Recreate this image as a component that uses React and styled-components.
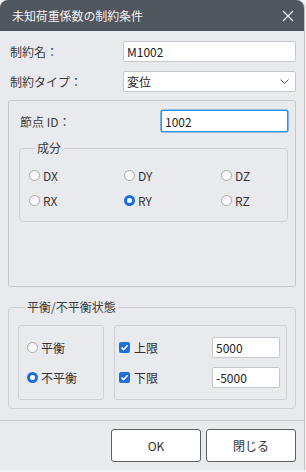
import React from "react";
import styled, { createGlobalStyle, css } from "styled-components";

const GlobalStyle = createGlobalStyle`
  html, body {
    margin: 0;
    padding: 0;
    background: #f3f3f4;
  }
  body {
    font-family: "Noto Sans CJK JP", "Noto Sans", sans-serif;
    font-size: 12px;
    color: #333;
  }
`;

const Dialog = styled.div`
  width: 304px;
  height: 470px;
  background: #e9eaee;
  border-radius: 8px 8px 0 0;
  box-shadow: 1px 0 0 #c3c5c9, 0 1px 1px rgba(0, 0, 0, 0.55);
  display: flex;
  flex-direction: column;
  overflow: hidden;
`;

const TitleBar = styled.div`
  height: 31px;
  flex: none;
  background: #50565d;
  display: flex;
  align-items: center;
  justify-content: space-between;
  padding: 0 10px 0 12px;
`;

const Title = styled.span`
  color: #f2f3f4;
  font-size: 12px;
  letter-spacing: -0.1px;
`;

const CloseButton = styled.div`
  width: 12px;
  height: 12px;
  display: flex;
  align-items: center;
  justify-content: center;
`;

const Body = styled.div`
  flex: 1;
  padding: 10px 8px 0;
  display: flex;
  flex-direction: column;
`;

const FormRow = styled.div`
  display: grid;
  grid-template-columns: 115px 173px;
  align-items: center;
  height: 21px;
  margin-bottom: ${(p) => p.$gap || 0}px;
`;

const Label = styled.span`
  padding-left: ${(p) => (p.$indent === undefined ? 2 : p.$indent)}px;
  color: #3a3a3a;
  white-space: nowrap;
`;

const fieldBox = css`
  box-sizing: border-box;
  background: #fff;
  border: 1px solid #c5c7cb;
  border-radius: 2px;
  display: flex;
  align-items: center;
  padding: 0 3px;
  font-size: 12px;
  color: #222;
`;

const TextField = styled.div`
  ${fieldBox};
  height: ${(p) => p.$h || 21}px;
  width: ${(p) => (p.$w ? `${p.$w}px` : "auto")};
  ${(p) =>
    p.$focused &&
    css`
      border-color: #3593e6;
      box-shadow: 0 0 0 0.6px #3593e6;
    `}
`;

const SelectField = styled.div`
  ${fieldBox};
  height: 21px;
  justify-content: space-between;
  padding-right: 6px;
`;

const Panel = styled.div`
  box-sizing: border-box;
  height: 187px;
  margin-top: 8px;
  border: 1px solid #c6c8cc;
  border-radius: 3px;
  padding: 9px 7px 0 10px;
`;

const NodeRow = styled.div`
  display: flex;
  align-items: center;
  justify-content: space-between;
  height: 22px;
  padding-left: 1px;
`;

const Group = styled.fieldset`
  margin: ${(p) => p.$mt || 0}px 0 0;
  padding: ${(p) => p.$pad};
  border: 1px solid #cfd1d5;
  border-radius: 4px;
  min-width: 0;
`;

const Legend = styled.legend`
  margin-left: ${(p) => p.$ml}px;
  padding: 0 2px;
  height: 16px;
  line-height: 16px;
  color: #3a3a3a;
`;

const RadioGrid = styled.div`
  display: grid;
  grid-template-columns: 95px 97px 1fr;
  row-gap: 5px;
`;

const Choice = styled.label`
  display: flex;
  align-items: center;
  gap: ${(p) => p.$gap || 3}px;
  height: 20px;
  color: #333;
`;

const RadioDot = styled.span`
  box-sizing: border-box;
  width: 11px;
  height: 11px;
  border-radius: 50%;
  flex: none;
  ${(p) =>
    p.$checked
      ? css`
          border: 3.5px solid #1b6fdc;
          background: #fff;
        `
      : css`
          border: 1px solid #a9abaf;
          background: linear-gradient(#f4f4f4, #ffffff);
        `}
`;

const CheckBox = styled.span`
  width: 11px;
  height: 11px;
  border-radius: 2px;
  background: #1f6fd8;
  flex: none;
  display: flex;
  align-items: center;
  justify-content: center;
`;

const StateRow = styled.div`
  display: flex;
  gap: 10px;
`;

const InnerBox = styled.div`
  box-sizing: border-box;
  height: 75px;
  border: 1px solid #cfd1d5;
  border-radius: 3px;
  display: flex;
  flex-direction: column;
  justify-content: center;
  gap: ${(p) => p.$gap}px;
  padding: ${(p) => p.$pad};
  width: ${(p) => (p.$w ? `${p.$w}px` : "auto")};
  flex: ${(p) => (p.$w ? "none" : 1)};
`;

const LimitRow = styled.div`
  display: flex;
  align-items: center;
  justify-content: space-between;
  height: 21px;
`;

const Footer = styled.div`
  margin-top: 10px;
  border-top: 1px solid #c6c8cc;
  padding: 8px 8px 8px 0;
  display: flex;
  justify-content: flex-end;
  gap: 5px;
`;

const Button = styled.button`
  width: 90px;
  height: 33px;
  background: #fff;
  border: 1px solid #5b5e63;
  border-radius: 3px;
  font-family: inherit;
  font-size: 12px;
  color: #333;
  padding: 0;
`;

const CloseIcon = () => (
  <svg width="12" height="12" viewBox="0 0 12 12">
    <path d="M1 1 L11 11 M11 1 L1 11" stroke="#f2f3f4" strokeWidth="1.2" />
  </svg>
);

const Chevron = () => (
  <svg width="9" height="5" viewBox="0 0 9 5">
    <polyline points="0.5,0.5 4.5,4.5 8.5,0.5" fill="none" stroke="#555" strokeWidth="1" />
  </svg>
);

const CheckMark = () => (
  <svg width="9" height="9" viewBox="0 0 9 9">
    <polyline points="1.5,4.7 3.6,6.7 7.6,2.3" fill="none" stroke="#fff" strokeWidth="1.6" />
  </svg>
);

const Radio = ({ label, checked }) => (
  <Choice>
    <RadioDot $checked={checked} />
    {label}
  </Choice>
);

const components = ["DX", "DY", "DZ", "RX", "RY", "RZ"];

export default function App() {
  return (
    <>
      <GlobalStyle />
      <Dialog>
        <TitleBar>
          <Title>未知荷重係数の制約条件</Title>
          <CloseButton>
            <CloseIcon />
          </CloseButton>
        </TitleBar>
        <Body>
          <FormRow $gap={9}>
            <Label>制約名：</Label>
            <TextField>M1002</TextField>
          </FormRow>
          <FormRow>
            <Label>制約タイプ：</Label>
            <SelectField>
              変位
              <Chevron />
            </SelectField>
          </FormRow>

          <Panel>
            <NodeRow>
              <Label $indent={0}>節点 ID：</Label>
              <TextField $w={127} $h={22} $focused>
                1002
              </TextField>
            </NodeRow>
            <Group $mt={8} $pad="9px 0 11px 9px">
              <Legend $ml={6}>成分</Legend>
              <RadioGrid>
                {components.map((c) => (
                  <Radio key={c} label={c} checked={c === "RY"} />
                ))}
              </RadioGrid>
            </Group>
          </Panel>

          <Group $mt={12} $pad="10px 8px 8px 9px">
            <Legend $ml={7}>平衡/不平衡状態</Legend>
            <StateRow>
              <InnerBox $w={86} $gap={10} $pad="0 0 0 8px">
                <Radio label="平衡" />
                <Radio label="不平衡" checked />
              </InnerBox>
              <InnerBox $gap={9} $pad="0 6px 0 4px">
                <LimitRow>
                  <Choice $gap={4}>
                    <CheckBox>
                      <CheckMark />
                    </CheckBox>
                    上限
                  </Choice>
                  <TextField $w={68}>5000</TextField>
                </LimitRow>
                <LimitRow>
                  <Choice $gap={4}>
                    <CheckBox>
                      <CheckMark />
                    </CheckBox>
                    下限
                  </Choice>
                  <TextField $w={68}>-5000</TextField>
                </LimitRow>
              </InnerBox>
            </StateRow>
          </Group>
        </Body>
        <Footer>
          <Button>OK</Button>
          <Button>閉じる</Button>
        </Footer>
      </Dialog>
    </>
  );
}
